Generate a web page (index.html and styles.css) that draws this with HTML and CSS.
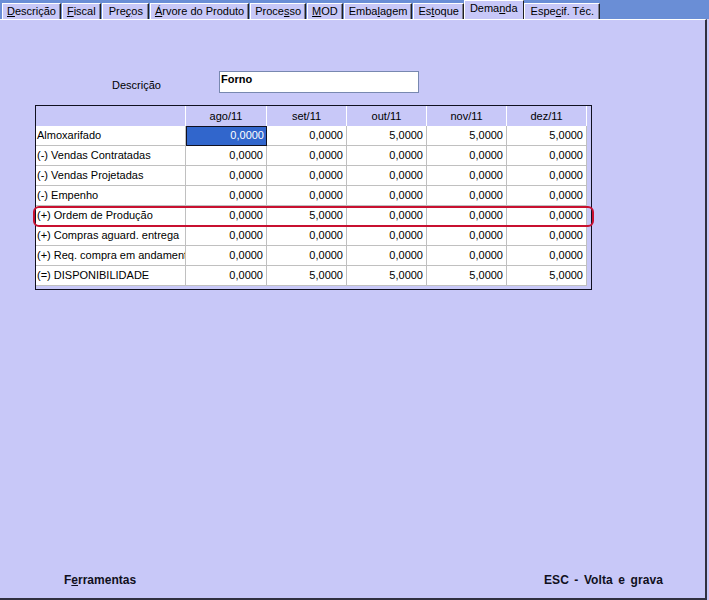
FILE: index.html
```html
<!DOCTYPE html>
<html lang="pt">
<head>
<meta charset="utf-8">
<title>Demanda</title>
<link rel="stylesheet" href="styles.css">
</head>
<body>
<div class="window">
  <div class="tabs">
    <div class="tab"><u>D</u>escrição</div>
    <div class="tab"><u>F</u>iscal</div>
    <div class="tab tab-wide">Pre<u>ç</u>os</div>
    <div class="tab"><u>Á</u>rvore do Produto</div>
    <div class="tab">Proce<u>s</u>so</div>
    <div class="tab"><u>M</u>OD</div>
    <div class="tab">Emba<u>l</u>agem</div>
    <div class="tab">Es<u>t</u>oque</div>
    <div class="tab active">Dema<u>n</u>da</div>
    <div class="tab tab-wide">Espe<u>c</u>if. Téc.</div>
  </div>
  <div class="panel">
    <div class="form-row">
      <label class="form-label">Descrição</label>
      <div class="input">Forno</div>
    </div>
    <div class="grid-wrap">
      <div class="grid">
        <div class="hcell"></div>
        <div class="hcell">ago/11</div>
        <div class="hcell">set/11</div>
        <div class="hcell">out/11</div>
        <div class="hcell">nov/11</div>
        <div class="hcell">dez/11</div>

        <div class="lcell">Almoxarifado</div>
        <div class="vcell sel">0,0000</div>
        <div class="vcell">0,0000</div>
        <div class="vcell">5,0000</div>
        <div class="vcell">5,0000</div>
        <div class="vcell">5,0000</div>

        <div class="lcell">(-) Vendas Contratadas</div>
        <div class="vcell">0,0000</div>
        <div class="vcell">0,0000</div>
        <div class="vcell">0,0000</div>
        <div class="vcell">0,0000</div>
        <div class="vcell">0,0000</div>

        <div class="lcell">(-) Vendas Projetadas</div>
        <div class="vcell">0,0000</div>
        <div class="vcell">0,0000</div>
        <div class="vcell">0,0000</div>
        <div class="vcell">0,0000</div>
        <div class="vcell">0,0000</div>

        <div class="lcell">(-) Empenho</div>
        <div class="vcell">0,0000</div>
        <div class="vcell">0,0000</div>
        <div class="vcell">0,0000</div>
        <div class="vcell">0,0000</div>
        <div class="vcell">0,0000</div>

        <div class="lcell">(+) Ordem de Produção</div>
        <div class="vcell">0,0000</div>
        <div class="vcell">5,0000</div>
        <div class="vcell">0,0000</div>
        <div class="vcell">0,0000</div>
        <div class="vcell">0,0000</div>

        <div class="lcell">(+) Compras aguard. entrega</div>
        <div class="vcell">0,0000</div>
        <div class="vcell">0,0000</div>
        <div class="vcell">0,0000</div>
        <div class="vcell">0,0000</div>
        <div class="vcell">0,0000</div>

        <div class="lcell">(+) Req. compra em andament</div>
        <div class="vcell">0,0000</div>
        <div class="vcell">0,0000</div>
        <div class="vcell">0,0000</div>
        <div class="vcell">0,0000</div>
        <div class="vcell">0,0000</div>

        <div class="lcell">(=) DISPONIBILIDADE</div>
        <div class="vcell">0,0000</div>
        <div class="vcell">5,0000</div>
        <div class="vcell">5,0000</div>
        <div class="vcell">5,0000</div>
        <div class="vcell">5,0000</div>
      </div>
      <div class="highlight"></div>
    </div>
    <div class="footer">
      <span class="footer-item">F<u>e</u>rramentas</span>
      <span class="footer-item footer-esc">ESC - Volta e grava</span>
    </div>
  </div>
</div>
</body>
</html>
```
FILE: styles.css
```css
* { box-sizing: border-box; }
html, body {
  margin: 0;
  padding: 0;
}
body {
  width: 709px;
  height: 600px;
  background: #c8c8f8;
  font-family: "Liberation Sans", Arial, sans-serif;
  font-size: 11px;
  color: #000;
  overflow: hidden;
}
.window {
  display: flex;
  flex-direction: column;
  height: 600px;
}
.tabs {
  display: flex;
  align-items: flex-end;
  height: 19px;
  padding-left: 2px;
  background: #6a8ed6;
}
.tab {
  height: 16px;
  line-height: 15px;
  padding: 0 4px;
  margin-right: 1px;
  background: #c8c8f8;
  border-top: 1px solid #ffffff;
  border-left: 1px solid #ffffff;
  border-right: 1px solid #202020;
  box-shadow: inset -1px 0 0 #808090;
  white-space: nowrap;
}
.tab-wide { padding: 0 5px 0 6px; }
.tab u { text-decoration: underline; }
.tab.active {
  height: 19px;
  line-height: 15px;
  padding: 0 5px;
  margin-left: -1px;
  margin-right: 0;
  box-shadow: none;
}
.panel {
  flex: 1;
  display: flex;
  flex-direction: column;
  margin-right: 2px;
  border-top: 1px solid #ffffff;
  border-right: 2px solid #303040;
  border-bottom: 2px solid #303040;
  background: #c8c8f8;
}
.form-row {
  display: flex;
  margin-top: 51px;
  padding-left: 112px;
  height: 22px;
}
.form-label {
  width: 107px;
  align-self: flex-end;
  line-height: 14px;
  padding-bottom: 1px;
}
.input {
  width: 200px;
  height: 22px;
  background: #ffffff;
  border: 1px solid #7888b0;
  font-weight: bold;
  padding: 1px 0 0 1px;
  line-height: 13px;
}
.grid-wrap {
  position: relative;
  margin-top: 12px;
  margin-left: 35px;
  width: 557px;
  height: 185px;
  border: 1px solid #101020;
  background: #c8c8f8;
}
.grid {
  display: grid;
  grid-template-columns: 150px 81px 80px 80px 80px 80px;
  grid-auto-rows: 20px;
}
.hcell {
  background: #c8c8f8;
  border-right: 1px solid #ffffff;
  text-align: center;
  line-height: 20px;
}
.lcell, .vcell {
  background: #ffffff;
  border-right: 1px solid #c0c0c0;
  border-bottom: 1px solid #c0c0c0;
  line-height: 19px;
  white-space: nowrap;
  overflow: hidden;
}
.lcell { padding-left: 1px; }
.vcell {
  text-align: right;
  padding-right: 3px;
}
.vcell.sel {
  background: #3166cc;
  color: #ffffff;
  border: 1px solid #101020;
  line-height: 17px;
  padding-right: 2px;
}
.highlight {
  position: absolute;
  left: -3px;
  top: 100px;
  width: 561px;
  height: 21px;
  border: 2px solid #c81030;
  border-radius: 6px;
  pointer-events: none;
}
.footer {
  margin-top: auto;
  display: flex;
  justify-content: space-between;
  padding: 0 42px 11px 64px;
}
.footer-item {
  font-size: 12px;
  font-weight: bold;
  line-height: 14px;
  color: #101020;
}
.footer-esc { word-spacing: 2px; letter-spacing: 0.1px; }
```
